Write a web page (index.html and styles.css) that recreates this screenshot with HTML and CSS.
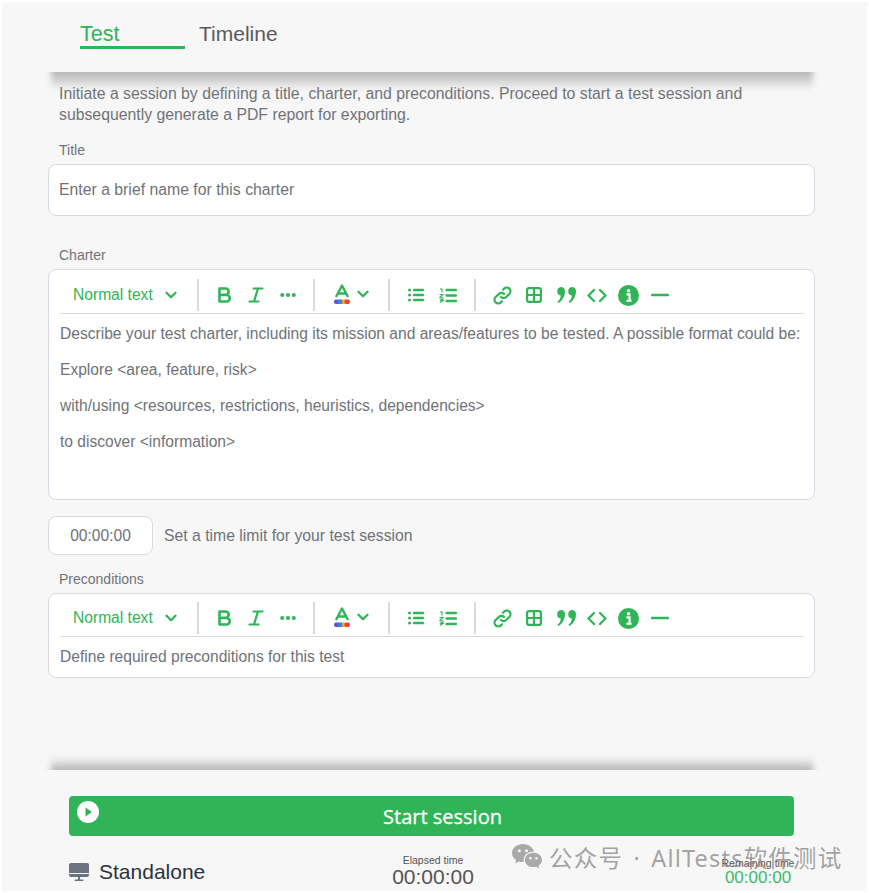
FILE: index.html
```html
<!DOCTYPE html>
<html lang="en">
<head>
<meta charset="utf-8">
<title>Test session</title>
<link rel="stylesheet" href="styles.css">
</head>
<body>
<svg class="defs" width="0" height="0" aria-hidden="true">
  <symbol id="i-chev" viewBox="0 0 12 12"><path d="M1.500 3.800 6 8.200l4.500-4.400" fill="none" stroke="currentColor" stroke-width="2.300" stroke-linecap="round" stroke-linejoin="round"/></symbol>
  <symbol id="i-bold" viewBox="0 0 16 16"><path d="M2.500 1.500h6a3.200 3.200 0 0 1 0 6.400h-6zm0 6.400h7a3.300 3.300 0 0 1 0 6.600h-7z" fill="none" stroke="currentColor" stroke-width="2.600" stroke-linejoin="round"/></symbol>
  <symbol id="i-italic" viewBox="0 0 16 16"><path d="M5.500 1.500h9M1.500 14.500h9M10 1.500l-4 13" fill="none" stroke="currentColor" stroke-width="2.200" stroke-linecap="round"/></symbol>
  <symbol id="i-more" viewBox="0 0 16 16"><circle cx="2.200" cy="8" r="2" fill="currentColor"/><circle cx="8" cy="8" r="2" fill="currentColor"/><circle cx="13.800" cy="8" r="2" fill="currentColor"/></symbol>
  <symbol id="i-color" viewBox="0 0 16 20"><path d="M2 13 8 1.500 14 13M4.500 9.500h7" fill="none" stroke="currentColor" stroke-width="2.400" stroke-linejoin="round"/><rect x="0" y="15.500" width="5.500" height="4.500" rx="2" fill="#6b4fd8"/><rect x="4" y="15.500" width="4" height="4.500" fill="#2f86e0"/><rect x="8" y="15.500" width="4" height="4.500" fill="#f2a33a"/><rect x="10.500" y="15.500" width="5.500" height="4.500" rx="2" fill="#e8452f"/></symbol>
  <symbol id="i-ul" viewBox="0 0 16 14"><g fill="currentColor"><circle cx="1.500" cy="2" r="1.500"/><circle cx="1.500" cy="7" r="1.500"/><circle cx="1.500" cy="12" r="1.500"/><rect x="5" y=".8" width="11" height="2.400" rx="1"/><rect x="5" y="5.800" width="11" height="2.400" rx="1"/><rect x="5" y="10.800" width="11" height="2.400" rx="1"/></g></symbol>
  <symbol id="i-ol" viewBox="0 0 18 15"><g fill="currentColor"><rect x="6.500" y=".8" width="11.500" height="2.400" rx="1"/><rect x="6.500" y="6.300" width="11.500" height="2.400" rx="1"/><rect x="6.500" y="11.800" width="11.500" height="2.400" rx="1"/></g><path d="M1 1h2v3.500M.5 6.500h3.500L.8 9.200h3.400M.8 11h3.200L2 12.500h2L.8 14.500" fill="none" stroke="currentColor" stroke-width="1.100"/></symbol>
  <symbol id="i-link" viewBox="0 0 18 18"><path d="M7.500 10.500a3.500 3.500 0 0 0 5 0l3-3a3.500 3.500 0 0 0-5-5l-1 1M10.500 7.500a3.500 3.500 0 0 0-5 0l-3 3a3.500 3.500 0 0 0 5 5l1-1" fill="none" stroke="currentColor" stroke-width="2.100" stroke-linecap="round"/></symbol>
  <symbol id="i-table" viewBox="0 0 16 16"><rect x="1.100" y="1.100" width="13.800" height="13.800" rx="2" fill="none" stroke="currentColor" stroke-width="2.200"/><path d="M8 1v14M1 8h14" stroke="currentColor" stroke-width="2.200"/></symbol>
  <symbol id="i-quote" viewBox="0 0 20 18"><path d="M4.500 1a4 4 0 0 1 4 4.300C8.500 10 6 15 2 17l-1-1.200c2-1.500 3-3.300 3.300-6.300A4.300 4.300 0 0 1 4.500 1zm11 0a4 4 0 0 1 4 4.300C19.500 10 17 15 13 17l-1-1.200c2-1.500 3-3.300 3.300-6.300A4.300 4.300 0 0 1 15.500 1z" fill="currentColor"/></symbol>
  <symbol id="i-code" viewBox="0 0 20 14"><path d="M7 1.500 1.500 7 7 12.500M13 1.500 18.500 7 13 12.500" fill="none" stroke="currentColor" stroke-width="2.300" stroke-linecap="round" stroke-linejoin="round"/></symbol>
  <symbol id="i-info" viewBox="0 0 20 20"><circle cx="10" cy="10" r="10" fill="currentColor"/><circle cx="10" cy="5.500" r="1.700" fill="#fff"/><path d="M8 9h3v6M8 15h5" fill="none" stroke="#fff" stroke-width="2.100"/></symbol>
  <symbol id="i-rule" viewBox="0 0 18 4"><rect y=".8" width="18" height="2.400" rx="1" fill="currentColor"/></symbol>
</svg>

<div class="panel">
  <nav class="tabs">
    <a class="tab tab-active">Test</a>
    <a class="tab">Timeline</a>
  </nav>

  <main class="content">
    <p class="intro">Initiate a session by defining a title, charter, and preconditions. Proceed to start a test session and subsequently generate a PDF report for exporting.</p>

    <label class="label label-title">Title</label>
    <div class="input">Enter a brief name for this charter</div>

    <label class="label label-charter">Charter</label>
    <section class="editor editor-charter">
      <div class="toolbar">
        <span class="style-select">Normal text <svg class="ic chev"><use href="#i-chev"/></svg></span>
        <span class="sep sep-a"></span>
        <svg class="ic bold"><use href="#i-bold"/></svg>
        <svg class="ic italic"><use href="#i-italic"/></svg>
        <svg class="ic more"><use href="#i-more"/></svg>
        <span class="sep sep-b"></span>
        <svg class="ic color"><use href="#i-color"/></svg>
        <svg class="ic chev chev-color"><use href="#i-chev"/></svg>
        <span class="sep sep-c"></span>
        <svg class="ic ul"><use href="#i-ul"/></svg>
        <svg class="ic ol"><use href="#i-ol"/></svg>
        <span class="sep sep-d"></span>
        <svg class="ic link"><use href="#i-link"/></svg>
        <svg class="ic table"><use href="#i-table"/></svg>
        <svg class="ic quote"><use href="#i-quote"/></svg>
        <svg class="ic code"><use href="#i-code"/></svg>
        <svg class="ic info"><use href="#i-info"/></svg>
        <svg class="ic rule"><use href="#i-rule"/></svg>
      </div>
      <div class="body">
        <p>Describe your test charter, including its mission and areas/features to be tested. A possible format could be:</p>
        <p>Explore &lt;area, feature, risk&gt;</p>
        <p>with/using &lt;resources, restrictions, heuristics, dependencies&gt;</p>
        <p>to discover &lt;information&gt;</p>
      </div>
    </section>

    <div class="limit">
      <div class="time-input">00:00:00</div>
      <span class="limit-text">Set a time limit for your test session</span>
    </div>

    <label class="label label-pre">Preconditions</label>
    <section class="editor editor-pre">
      <div class="toolbar">
        <span class="style-select">Normal text <svg class="ic chev"><use href="#i-chev"/></svg></span>
        <span class="sep sep-a"></span>
        <svg class="ic bold"><use href="#i-bold"/></svg>
        <svg class="ic italic"><use href="#i-italic"/></svg>
        <svg class="ic more"><use href="#i-more"/></svg>
        <span class="sep sep-b"></span>
        <svg class="ic color"><use href="#i-color"/></svg>
        <svg class="ic chev chev-color"><use href="#i-chev"/></svg>
        <span class="sep sep-c"></span>
        <svg class="ic ul"><use href="#i-ul"/></svg>
        <svg class="ic ol"><use href="#i-ol"/></svg>
        <span class="sep sep-d"></span>
        <svg class="ic link"><use href="#i-link"/></svg>
        <svg class="ic table"><use href="#i-table"/></svg>
        <svg class="ic quote"><use href="#i-quote"/></svg>
        <svg class="ic code"><use href="#i-code"/></svg>
        <svg class="ic info"><use href="#i-info"/></svg>
        <svg class="ic rule"><use href="#i-rule"/></svg>
      </div>
      <div class="body body-pre"><p>Define required preconditions for this test</p></div>
    </section>
  </main>

  <footer class="footer">
    <button class="start" type="button">
      <svg class="play" viewBox="0 0 22 22"><circle cx="11" cy="11" r="11" fill="#fff"/><path d="M8.500 6.500 15 11l-6.500 4.500z" fill="#2fb457"/></svg>
      <span>Start session</span>
    </button>
    <div class="status">
      <div class="mode">
        <svg class="monitor" viewBox="0 0 20 18"><path d="M2 0h16a2 2 0 0 1 2 2v8H0V2a2 2 0 0 1 2-2z" fill="#6b7280"/><path d="M0 11h20v1a2 2 0 0 1-2 2H2a2 2 0 0 1-2-2z" fill="#6b7280"/><rect x="9" y="14" width="2" height="3" fill="#6b7280"/><rect x="5.500" y="16.500" width="9" height="1.500" rx=".7" fill="#6b7280"/></svg>
        <span>Standalone</span>
      </div>
      <div class="timer timer-elapsed"><small>Elapsed time</small><b>00:00:00</b></div>
      <div class="timer timer-remaining"><small>Remaining time</small><b>00:00:00</b></div>
    </div>
  </footer>

  <div class="watermark">
    <svg class="wechat" viewBox="0 0 32 28"><path d="M12 1C5.900 1 1 5 1 10c0 2.900 1.600 5.400 4.200 7.100L4.200 20.500l3.700-2c1.300.4 2.700.6 4.100.6h.8a8.500 8.500 0 0 1-.3-2.100c0-4.800 4.500-8.600 10-8.600h.6C21.500 4.200 17.200 1 12 1z" fill="#a9a9a9"/><path d="M31 16.900c0-4-3.900-7.200-8.600-7.200s-8.600 3.200-8.600 7.200 3.900 7.200 8.600 7.200c1 0 2-.2 2.900-.4l3 1.700-.8-2.800c2.100-1.300 3.500-3.400 3.500-5.700z" fill="#a9a9a9"/><circle cx="8.300" cy="7.800" r="1.500" fill="#f7f7f7"/><circle cx="15.500" cy="7.800" r="1.500" fill="#f7f7f7"/><circle cx="19.400" cy="15.300" r="1.200" fill="#f7f7f7"/><circle cx="25.400" cy="15.300" r="1.200" fill="#f7f7f7"/></svg>
    <span>公众号 · AllTests软件测试</span>
  </div>
</div>
</body>
</html>
```

FILE: styles.css
```css
* { box-sizing: border-box; }
html, body { margin: 0; padding: 0; background: #fff; }
body { font-family: "Liberation Sans", Arial, sans-serif; width: 869px; height: 893px; overflow: hidden; }
.defs { position: absolute; }

.panel { position: relative; margin: 2px 2px 0 2px; height: 889px; background: #f7f7f7; display: flex; flex-direction: column; overflow: hidden; }

.tabs { height: 70px; display: flex; padding: 19px 0 0 78px; flex: none; }
.tab { width: 105px; height: 28px; margin-right: 14px; font-size: 21.500px; line-height: 26px; color: #5a5a5a; }
.tab + .tab { font-size: 21px; line-height: 25px; }
.tab-active { color: #2fb457; border-bottom: 3px solid #2fb457; }

.content { position: relative; height: 698px; flex: none; padding: 0 52px 0 46px; color: #6f7378; overflow: hidden; }
.content::before, .content::after { content: ""; position: absolute; left: 49px; width: 762px; filter: blur(3px); }
.content::before { top: -6px; height: 24px; background: linear-gradient(#b0b0b0, #b4b4b4 25%, rgba(190,190,190,0)); }
.content::after { bottom: -6px; height: 18px; background: linear-gradient(rgba(180,180,180,0), #b4b4b4 65%); }

.intro { margin: 11px 0 0 11px; font-size: 15.800px; line-height: 21px; width: 720px; }
.label { display: block; font-size: 14px; line-height: 16px; margin-left: 11px; }
.label-title { margin-top: 17px; }
.input { height: 52px; margin-top: 6px; background: #fff; border: 1px solid #d5dbe3; border-radius: 8px; padding: 0 10px; font-size: 15.800px; line-height: 50px; }
.label-charter { margin-top: 31px; }
.label-pre { margin-top: 16px; }

.editor { margin-top: 6px; background: #fff; border: 1px solid #d5dbe3; border-radius: 8px; padding: 0 10px 0 11px; }
.editor-charter { height: 231px; }
.editor-pre { height: 85px; }

.toolbar { height: 44px; padding-top: 7px; border-bottom: 1px solid #d5dbe3; display: flex; align-items: center; color: #2fb457; padding-left: 13px; }
.editor-pre .toolbar { height: 43px; padding-top: 6px; }
.style-select { font-size: 15.600px; width: 114px; flex: none; display: flex; align-items: center; white-space: nowrap; }
.ic { flex: none; display: block; }
.chev { width: 12px; height: 12px; margin-left: 12px; }
.sep { width: 2px; height: 32px; background: #d5dbe3; flex: none; }
.sep-a { margin-left: 10px; }
.bold { width: 16px; height: 16px; margin-left: 18px; }
.italic { width: 16px; height: 16px; margin-left: 15px; }
.more { width: 16px; height: 16px; margin-left: 16px; }
.sep-b { margin-left: 17px; }
.color { width: 16px; height: 20px; margin-left: 19px; margin-top: -2px; }
.chev-color { margin-left: 7px; margin-top: -2px; }
.sep-c { margin-left: 19px; }
.ul { width: 16px; height: 14px; margin-left: 18px; }
.ol { width: 18px; height: 15px; margin-left: 15px; }
.sep-d { margin-left: 17px; }
.link { width: 19px; height: 19px; margin-left: 17px; }
.table { width: 16px; height: 16px; margin-left: 14px; }
.quote { width: 21px; height: 18px; margin-left: 14px; }
.code { width: 20px; height: 15px; margin-left: 10px; }
.info { width: 21px; height: 21px; margin-left: 11px; }
.rule { width: 18px; height: 4px; margin-left: 12px; }

.body { padding-top: 10px; font-size: 15.600px; line-height: 20px; }
.body p { margin: 0 0 16px 0; white-space: nowrap; }

.limit { display: flex; align-items: center; margin-top: 16px; }
.time-input { width: 105px; height: 39px; background: #fff; border: 1px solid #d5dbe3; border-radius: 8px; text-align: center; font-size: 15.600px; line-height: 37px; }
.limit-text { margin-left: 11px; font-size: 15.750px; }

.footer { flex: none; padding: 26px 0 0 67px; }
.start { position: relative; width: 725px; height: 40px; border: 0; border-radius: 4px; background: #2fb457; color: #fff; font-family: "Open Sans", sans-serif; font-size: 20px; font-weight: 500; -webkit-text-stroke: .3px #fff; padding: 0 0 0 22px; display: block; text-align: center; }
.play { position: absolute; left: 8px; top: 5px; width: 22px; height: 22px; }
.status { display: flex; align-items: flex-start; margin-top: 16px; position: relative; height: 40px; }
.mode { display: flex; align-items: center; font-size: 21px; color: #2c323b; width: 322px; padding-top: 8px; }
.monitor { width: 20px; height: 18px; margin-right: 10px; }
.timer { display: flex; flex-direction: column; align-items: center; color: #555; width: 84px; }
.timer small { font-size: 10.500px; line-height: 12px; margin-top: 2px; white-space: nowrap; }
.timer b { font-weight: 400; font-size: 21px; line-height: 21px; white-space: nowrap; }
.timer-remaining { margin-left: 241px; }
.timer-remaining small { margin-top: 5px; }
.timer-remaining b { color: #3dbb6b; font-size: 17px; line-height: 17px; }

.watermark { position: absolute; left: 509px; top: 838px; display: flex; align-items: center; color: rgba(130,130,130,.72); font-family: "Noto Sans", "Noto Sans CJK SC", sans-serif; font-size: 23.500px; letter-spacing: 1.200px; word-spacing: 3px; white-space: nowrap; }
.wechat { width: 32px; height: 28px; margin-right: 6px; }
```
